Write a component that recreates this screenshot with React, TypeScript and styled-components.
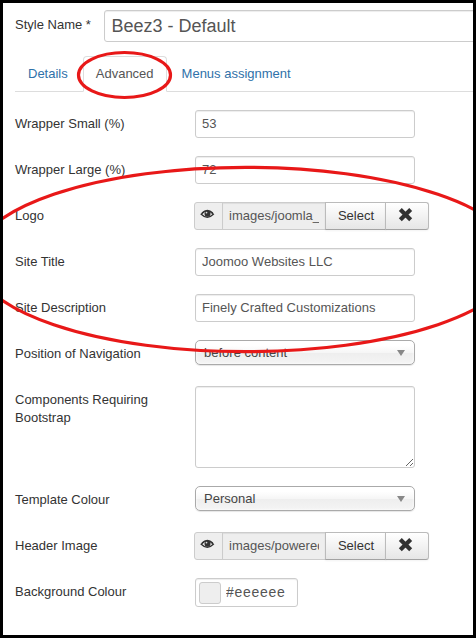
import React from 'react';
import styled, { createGlobalStyle, css } from 'styled-components';

const GlobalStyle = createGlobalStyle`
  *, *::before, *::after { box-sizing: border-box; }
  body {
    margin: 0;
    background: #fff;
    color: #333;
    font: 13px/18px "Liberation Sans", Arial, sans-serif;
  }
  input, textarea, button { font: inherit; margin: 0; }
`;

const Frame = styled.main`
  position: relative;
  width: 476px;
  height: 638px;
  border: 3px solid #000;
  overflow: hidden;
  background: #fff;
`;

const field = css`
  border: 1px solid #ccc;
  border-radius: 3px;
  background: #fff;
  color: #555;
  box-shadow: inset 0 1px 1px rgba(0, 0, 0, 0.075);
  outline: none;
`;

const TitleRow = styled.div`
  display: flex;
  margin: 7px 0 0 12px;
`;

const TitleLabel = styled.label`
  width: 89px;
  padding-top: 6px;
  flex: none;
`;

const TitleInput = styled.input`
  ${field}
  width: 420px;
  height: 32px;
  flex: none;
  padding: 4px 6.5px;
  font-size: 18px;
  line-height: 22px;
`;

const Tabs = styled.nav`
  display: flex;
  height: 36px;
  margin: 14px 0 0 12px;
  border-bottom: 1px solid #ddd;
`;

const Tab = styled.a<{ $active?: boolean }>`
  height: 36px;
  margin-right: 2px;
  padding: 8px 12px;
  border: 1px solid ${(p) => (p.$active ? '#ddd' : 'transparent')};
  border-bottom-color: ${(p) => (p.$active ? '#fff' : '#ddd')};
  border-radius: 4px 4px 0 0;
  color: ${(p) => (p.$active ? '#555' : '#3071a9')};
`;

const Form = styled.form`
  display: flex;
  flex-direction: column;
  gap: 18px;
  margin: 18px 0 0 12px;
`;

const Row = styled.div`
  display: flex;
  align-items: flex-start;
  min-height: 28px;
`;

const Label = styled.label`
  width: 160px;
  padding: 5px 20px 0 0;
  margin-right: 20px;
  flex: none;
`;

const TextInput = styled.input`
  ${field}
  width: 220px;
  height: 28px;
  padding: 3px 6px 5px;
`;

const TextArea = styled.textarea`
  ${field}
  display: block;
  width: 220px;
  height: 82px;
  padding: 4px 6px;
`;

const Select = styled.div`
  display: flex;
  align-items: center;
  justify-content: space-between;
  width: 220px;
  height: 25px;
  padding: 0 9px 0 8px;
  border: 1px solid #aaa;
  border-radius: 5px;
  background: linear-gradient(#fff 20%, #f6f6f6 50%, #eee 52%, #f4f4f4 100%);
  box-shadow: inset 0 0 3px #fff, 0 1px 1px rgba(0, 0, 0, 0.1);
  color: #444;
`;

const Arrow = styled.i`
  border: solid transparent;
  border-width: 6px 4px 0;
  border-top-color: #888;
`;

const Media = styled.div`
  display: flex;
  height: 28px;
  margin-left: -1px;
`;

const Preview = styled.span`
  width: 29px;
  padding: 4px 5px 0;
  border: 1px solid #ccc;
  border-radius: 3px 0 0 3px;
  background: #eee;
`;

const PathInput = styled.input`
  ${field}
  width: 104px;
  margin-left: -1px;
  padding: 4px 6px;
  border-radius: 0;
  background: #eee;
`;

const Button = styled.button<{ $width: number; $last?: boolean }>`
  display: flex;
  justify-content: ${(p) => (p.$last ? 'flex-start' : 'center')};
  width: ${(p) => p.$width}px;
  margin-left: -1px;
  padding: 4px 0 4px ${(p) => (p.$last ? '12px' : '1px')};
  border: 1px solid #bbb;
  border-bottom-color: #a2a2a2;
  border-radius: ${(p) => (p.$last ? '0 3px 3px 0' : '0')};
  background: linear-gradient(#fff, #e6e6e6);
  box-shadow: inset 0 1px 0 rgba(255, 255, 255, 0.2), 0 1px 2px rgba(0, 0, 0, 0.05);
  color: #333;
`;

const ColorField = styled.div`
  ${field}
  display: flex;
  width: 103px;
  height: 29px;
  padding: 3px;
`;

const Swatch = styled.span`
  width: 22px;
  height: 22px;
  flex: none;
  border: 1px solid #ccc;
  border-radius: 3px;
  background: #eee;
`;

const ColorInput = styled.input`
  width: 68px;
  height: 20px;
  padding: 0 0 0 5px;
  border: 0;
  outline: none;
  background: transparent;
  color: #555;
  font-size: 14px;
  letter-spacing: 0.7px;
`;

const Annotations = styled.svg`
  position: absolute;
  top: -3px;
  left: -3px;
  pointer-events: none;
`;

const EyeIcon = () => (
  <svg width="15" height="14" viewBox="0 0 15 14" aria-hidden="true">
    <path d="M1.2 7.2Q7.3 .4 13.4 7.2Q7.3 13.2 1.2 7.2Z" fill="#eee" stroke="#333" strokeWidth="1.3" />
    <path d="M2 6Q7.3 .9 12.8 6" fill="none" stroke="#333" strokeWidth="1.3" />
    <circle cx="7.5" cy="6.8" r="3" fill="#333" />
    <circle cx="6.5" cy="5.6" r=".9" fill="#ddd" />
  </svg>
);

const CrossIcon = () => (
  <svg width="15" height="16" viewBox="0 0 15 16" aria-hidden="true">
    <path d="M2.3 2.6L12.7 12.8M12.7 2.6L2.3 12.8" stroke="#333" strokeWidth="4.2" />
  </svg>
);

const MediaPicker = ({ path }: { path: string }) => (
  <Media>
    <Preview><EyeIcon /></Preview>
    <PathInput readOnly value={path} />
    <Button type="button" $width={61}>Select</Button>
    <Button type="button" $width={44} $last aria-label="Clear"><CrossIcon /></Button>
  </Media>
);

const FormRow = ({ label, children }: { label: string; children: React.ReactNode }) => (
  <Row>
    <Label>{label}</Label>
    {children}
  </Row>
);

export default function App() {
  return (
    <>
      <GlobalStyle />
      <Frame>
        <TitleRow>
          <TitleLabel>Style Name *</TitleLabel>
          <TitleInput defaultValue="Beez3 - Default" />
        </TitleRow>
        <Tabs>
          <Tab>Details</Tab>
          <Tab $active>Advanced</Tab>
          <Tab>Menus assignment</Tab>
        </Tabs>
        <Form>
          <FormRow label="Wrapper Small (%)"><TextInput defaultValue="53" /></FormRow>
          <FormRow label="Wrapper Large (%)"><TextInput defaultValue="72" /></FormRow>
          <FormRow label="Logo"><MediaPicker path="images/joomla_black.gif" /></FormRow>
          <FormRow label="Site Title"><TextInput defaultValue="Joomoo Websites LLC" /></FormRow>
          <FormRow label="Site Description"><TextInput defaultValue="Finely Crafted Customizations" /></FormRow>
          <FormRow label="Position of Navigation"><Select>before content<Arrow /></Select></FormRow>
          <FormRow label="Components Requiring Bootstrap"><TextArea /></FormRow>
          <FormRow label="Template Colour"><Select>Personal<Arrow /></Select></FormRow>
          <FormRow label="Header Image"><MediaPicker path="images/powered_by.png" /></FormRow>
          <FormRow label="Background Colour">
            <ColorField>
              <Swatch />
              <ColorInput defaultValue="#eeeeee" />
            </ColorField>
          </FormRow>
        </Form>
        <Annotations width="476" height="638" viewBox="0 0 476 638" fill="none" stroke="#e81818" strokeWidth="3.2">
          <ellipse cx="124.5" cy="75" rx="46" ry="22.5" />
          <ellipse cx="245.8" cy="259.5" rx="271.6" ry="92.2" />
        </Annotations>
      </Frame>
    </>
  );
}
